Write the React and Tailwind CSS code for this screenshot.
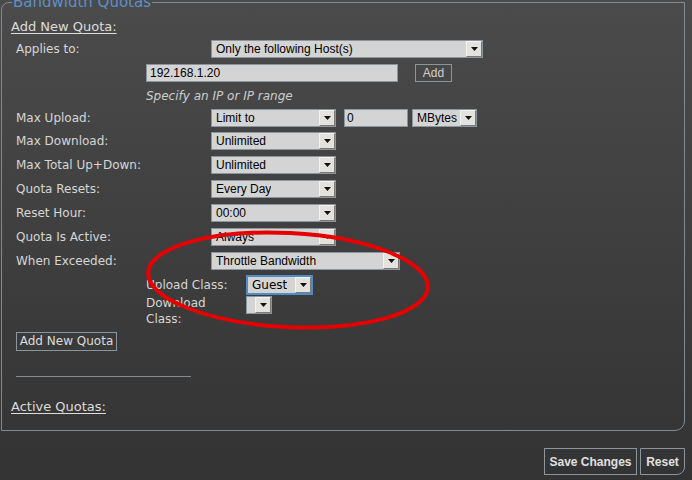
import React from 'react';

const LABEL_FONT = { fontFamily: '"DejaVu Sans", Verdana, sans-serif' };
const FIELD_FONT = { fontFamily: '"Liberation Sans", Arial, sans-serif' };

const Arrow = () => (
  <div className="flex h-[16px] w-[16px] shrink-0 items-center justify-center border border-t-[#f4f3ef] border-l-[#f4f3ef] border-r-[#7a7a7a] border-b-[#7a7a7a] bg-[#e4e2dc]">
    <svg width="7" height="4" viewBox="0 0 7 4"><path d="M0 0h7L3.5 4z" fill="#111" /></svg>
  </div>
);

const Select = ({ value, w, focus, font }) => (
  <div
    className={`flex h-[18px] items-center justify-between bg-[#d4d4d4] text-[12px] text-black ${focus ? 'h-[20px] border-2 border-[#4f8dc6]' : 'border border-[#8a959e]'}`}
    style={{ width: w, ...(font || FIELD_FONT) }}
  >
    <span className="truncate pl-[4px] leading-[16px]">{value}</span>
    <Arrow />
  </div>
);

const Row = ({ label, children, mt = 'mt-[6px]' }) => (
  <div className={`flex h-[18px] items-center ${mt}`}>
    <div className="w-[200px] shrink-0 pl-[5px] text-[12px] text-[#d6d6d6]" style={LABEL_FONT}>{label}</div>
    {children}
  </div>
);

export default function App() {
  return (
    <div className="relative h-[480px] w-[692px] overflow-hidden bg-gradient-to-b from-[#4b4b4b] to-[#333333]">
      <div className="mt-[-8px] pl-[1px]">
        <fieldset className="w-[684px] rounded-tl-[8px] rounded-br-[10px] border border-[#7f8b95] px-[9px] pb-[15px]">
          <legend className="ml-[1px] px-[1px] text-[15px] leading-[20px] text-[#5d8fc9]" style={LABEL_FONT}>Bandwidth Quotas</legend>

          <div className="mt-[7px] text-[13px] leading-[16px] text-[#dcdcdc] underline underline-offset-[2px]" style={LABEL_FONT}>Add New Quota:</div>

          <Row label="Applies to:" mt="mt-[5px]">
            <Select value="Only the following Host(s)" w={272} />
          </Row>

          <div className="mt-[6px] flex h-[18px] items-center pl-[135px]">
            <div className="flex h-[18px] w-[252px] items-center border border-[#8a959e] bg-[#d4d4d4] pl-[3px] text-[12px] text-black" style={FIELD_FONT}>192.168.1.20</div>
            <button className="ml-[17px] h-[18px] w-[37px] border border-[#8a959e] text-[12px] leading-[16px] text-[#cfcfcf]" style={FIELD_FONT}>Add</button>
          </div>

          <div className="mt-[6px] pl-[135px] text-[12px] italic leading-[16px] text-[#cdcdcd]" style={LABEL_FONT}>Specify an IP or IP range</div>

          <Row label="Max Upload:" mt="mt-[5px]">
            <Select value="Limit to" w={125} />
            <div className="ml-[8px] flex h-[18px] w-[64px] items-center border border-[#8a959e] bg-[#d4d4d4] pl-[2px] text-[12px] text-black" style={FIELD_FONT}>0</div>
            <div className="ml-[4px]"><Select value="MBytes" w={65} /></div>
          </Row>
          <Row label="Max Download:" mt="mt-[5px]"><Select value="Unlimited" w={125} /></Row>
          <Row label="Max Total Up+Down:"><Select value="Unlimited" w={125} /></Row>
          <Row label="Quota Resets:"><Select value="Every Day" w={125} /></Row>
          <Row label="Reset Hour:"><Select value="00:00" w={125} /></Row>
          <Row label="Quota Is Active:"><Select value="Always" w={125} /></Row>
          <Row label="When Exceeded:"><Select value="Throttle Bandwidth" w={189} /></Row>

          <div className="mt-[5px] flex h-[20px] items-center pl-[135px]">
            <div className="w-[100px] text-[12px] text-[#d6d6d6]" style={LABEL_FONT}>Upload Class:</div>
            <Select value="Guest" w={67} focus font={LABEL_FONT} />
          </div>
          <div className="mt-0 flex items-start pl-[135px]">
            <div className="w-[100px] text-[12px] leading-[16px] text-[#d6d6d6]" style={LABEL_FONT}>Download<br />Class:</div>
            <div className="mt-[1px]"><Select value="" w={26} /></div>
          </div>

          <button className="ml-[5px] mt-[4px] h-[19px] w-[101px] border border-[#8a959e] text-[12px] leading-[17px] text-[#dcdcdc]" style={LABEL_FONT}>Add New Quota</button>

          <div className="ml-[5px] mt-[25px] h-px w-[175px] bg-[#7f8b95]" />

          <div className="mt-[22px] text-[13px] leading-[16px] text-[#dcdcdc] underline underline-offset-[2px]" style={LABEL_FONT}>Active Quotas:</div>
        </fieldset>
      </div>

      <div className="mt-[17px] flex justify-end gap-[3px] pr-[7px]">
        <button className="h-[27px] w-[93px] border border-[#8a959e] text-[12px] font-bold text-[#e0e0e0]" style={FIELD_FONT}>Save Changes</button>
        <button className="h-[27px] w-[45px] rounded-br-[8px] border border-[#8a959e] text-[12px] font-bold text-[#e0e0e0]" style={FIELD_FONT}>Reset</button>
      </div>

      <svg className="pointer-events-none absolute left-0 top-0" width="692" height="480">
        <ellipse cx="288" cy="280" rx="140" ry="47" transform="rotate(3 288 280)" fill="none" stroke="#e60000" strokeWidth="4" />
      </svg>
    </div>
  );
}
